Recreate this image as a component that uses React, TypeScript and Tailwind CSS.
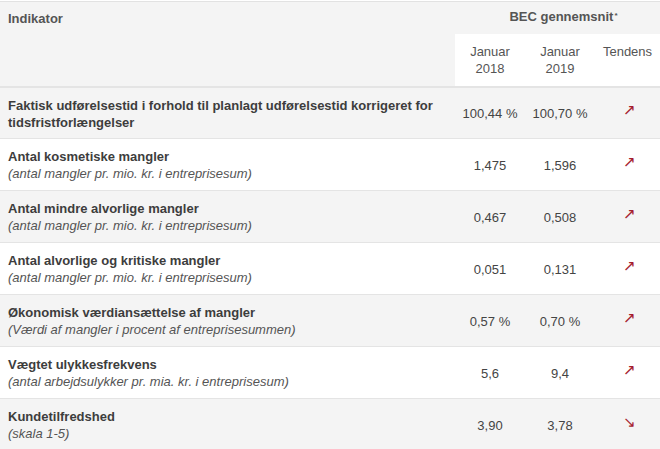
import React from "react";

type Row = {
  title: string;
  sub?: string;
  a: string;
  b: string;
  up: boolean;
};

const rows: Row[] = [
  {
    title:
      "Faktisk udførelsestid i forhold til planlagt udførelsestid korrigeret for tidsfristforlængelser",
    a: "100,44 %",
    b: "100,70 %",
    up: true,
  },
  { title: "Antal kosmetiske mangler", sub: "(antal mangler pr. mio. kr. i entreprisesum)", a: "1,475", b: "1,596", up: true },
  { title: "Antal mindre alvorlige mangler", sub: "(antal mangler pr. mio. kr. i entreprisesum)", a: "0,467", b: "0,508", up: true },
  { title: "Antal alvorlige og kritiske mangler", sub: "(antal mangler pr. mio. kr. i entreprisesum)", a: "0,051", b: "0,131", up: true },
  { title: "Økonomisk værdiansættelse af mangler", sub: "(Værdi af mangler i procent af entreprisesummen)", a: "0,57 %", b: "0,70 %", up: true },
  { title: "Vægtet ulykkesfrekvens", sub: "(antal arbejdsulykker pr. mia. kr. i entreprisesum)", a: "5,6", b: "9,4", up: true },
  { title: "Kundetilfredshed", sub: "(skala 1-5)", a: "3,90", b: "3,78", up: false },
];

function App() {
  return (
    <div className="w-[660px] h-[449px] overflow-hidden bg-white font-['Liberation_Sans',Arial,sans-serif] text-[13px] leading-[17px] text-[#444]">
      <table className="w-[660px] border-collapse table-fixed mt-px">
        <colgroup>
          <col className="w-[455px]" />
          <col className="w-[70px]" />
          <col className="w-[70px]" />
          <col className="w-[65px]" />
        </colgroup>
        <thead>
          <tr className="bg-[#f4f4f4] border-t border-[#e2e2e2]">
            <th rowSpan={2} className="align-top text-left font-bold text-[#555] pl-2 pt-[8px] h-[32px]">
              Indikator
            </th>
            <th colSpan={3} className="h-[32px] text-center font-bold text-[#555] pl-3 align-middle">
              BEC gennemsnit<span className="text-[8px] relative -top-[3px] ml-px">*</span>
            </th>
          </tr>
          <tr className="border-b-2 border-[#e4e4e4]">
            <th className="bg-white h-[53px] align-top pt-[9px] font-normal text-[#555]">
              Januar
              <br />
              2018
            </th>
            <th className="bg-white align-top pt-[9px] font-normal text-[#555]">
              Januar
              <br />
              2019
            </th>
            <th className="bg-white align-top pt-[9px] font-normal text-[#555]">Tendens</th>
          </tr>
        </thead>
        <tbody>
          {rows.map((r, i) => (
            <tr
              key={r.title}
              className={`${i % 2 === 0 ? "bg-[#f4f4f4]" : "bg-white"} border-b border-[#e4e4e4]`}
            >
              <td className="h-[52px] align-top pl-2 pt-[9px]">
                <div className="font-bold text-[#3d3d3d]">{r.title}</div>
                {r.sub && <div className="italic text-[#555]">{r.sub}</div>}
              </td>
              <td className="text-center align-middle pt-[2px]">{r.a}</td>
              <td className="text-center align-middle pt-[2px]">{r.b}</td>
              <td className="text-center align-middle pb-[5px] pl-1 text-[15px] text-[#a51c30] font-['DejaVu_Sans',sans-serif]">
                {r.up ? "↗" : "↘"}
              </td>
            </tr>
          ))}
        </tbody>
      </table>
    </div>
  );
}

export default App;
